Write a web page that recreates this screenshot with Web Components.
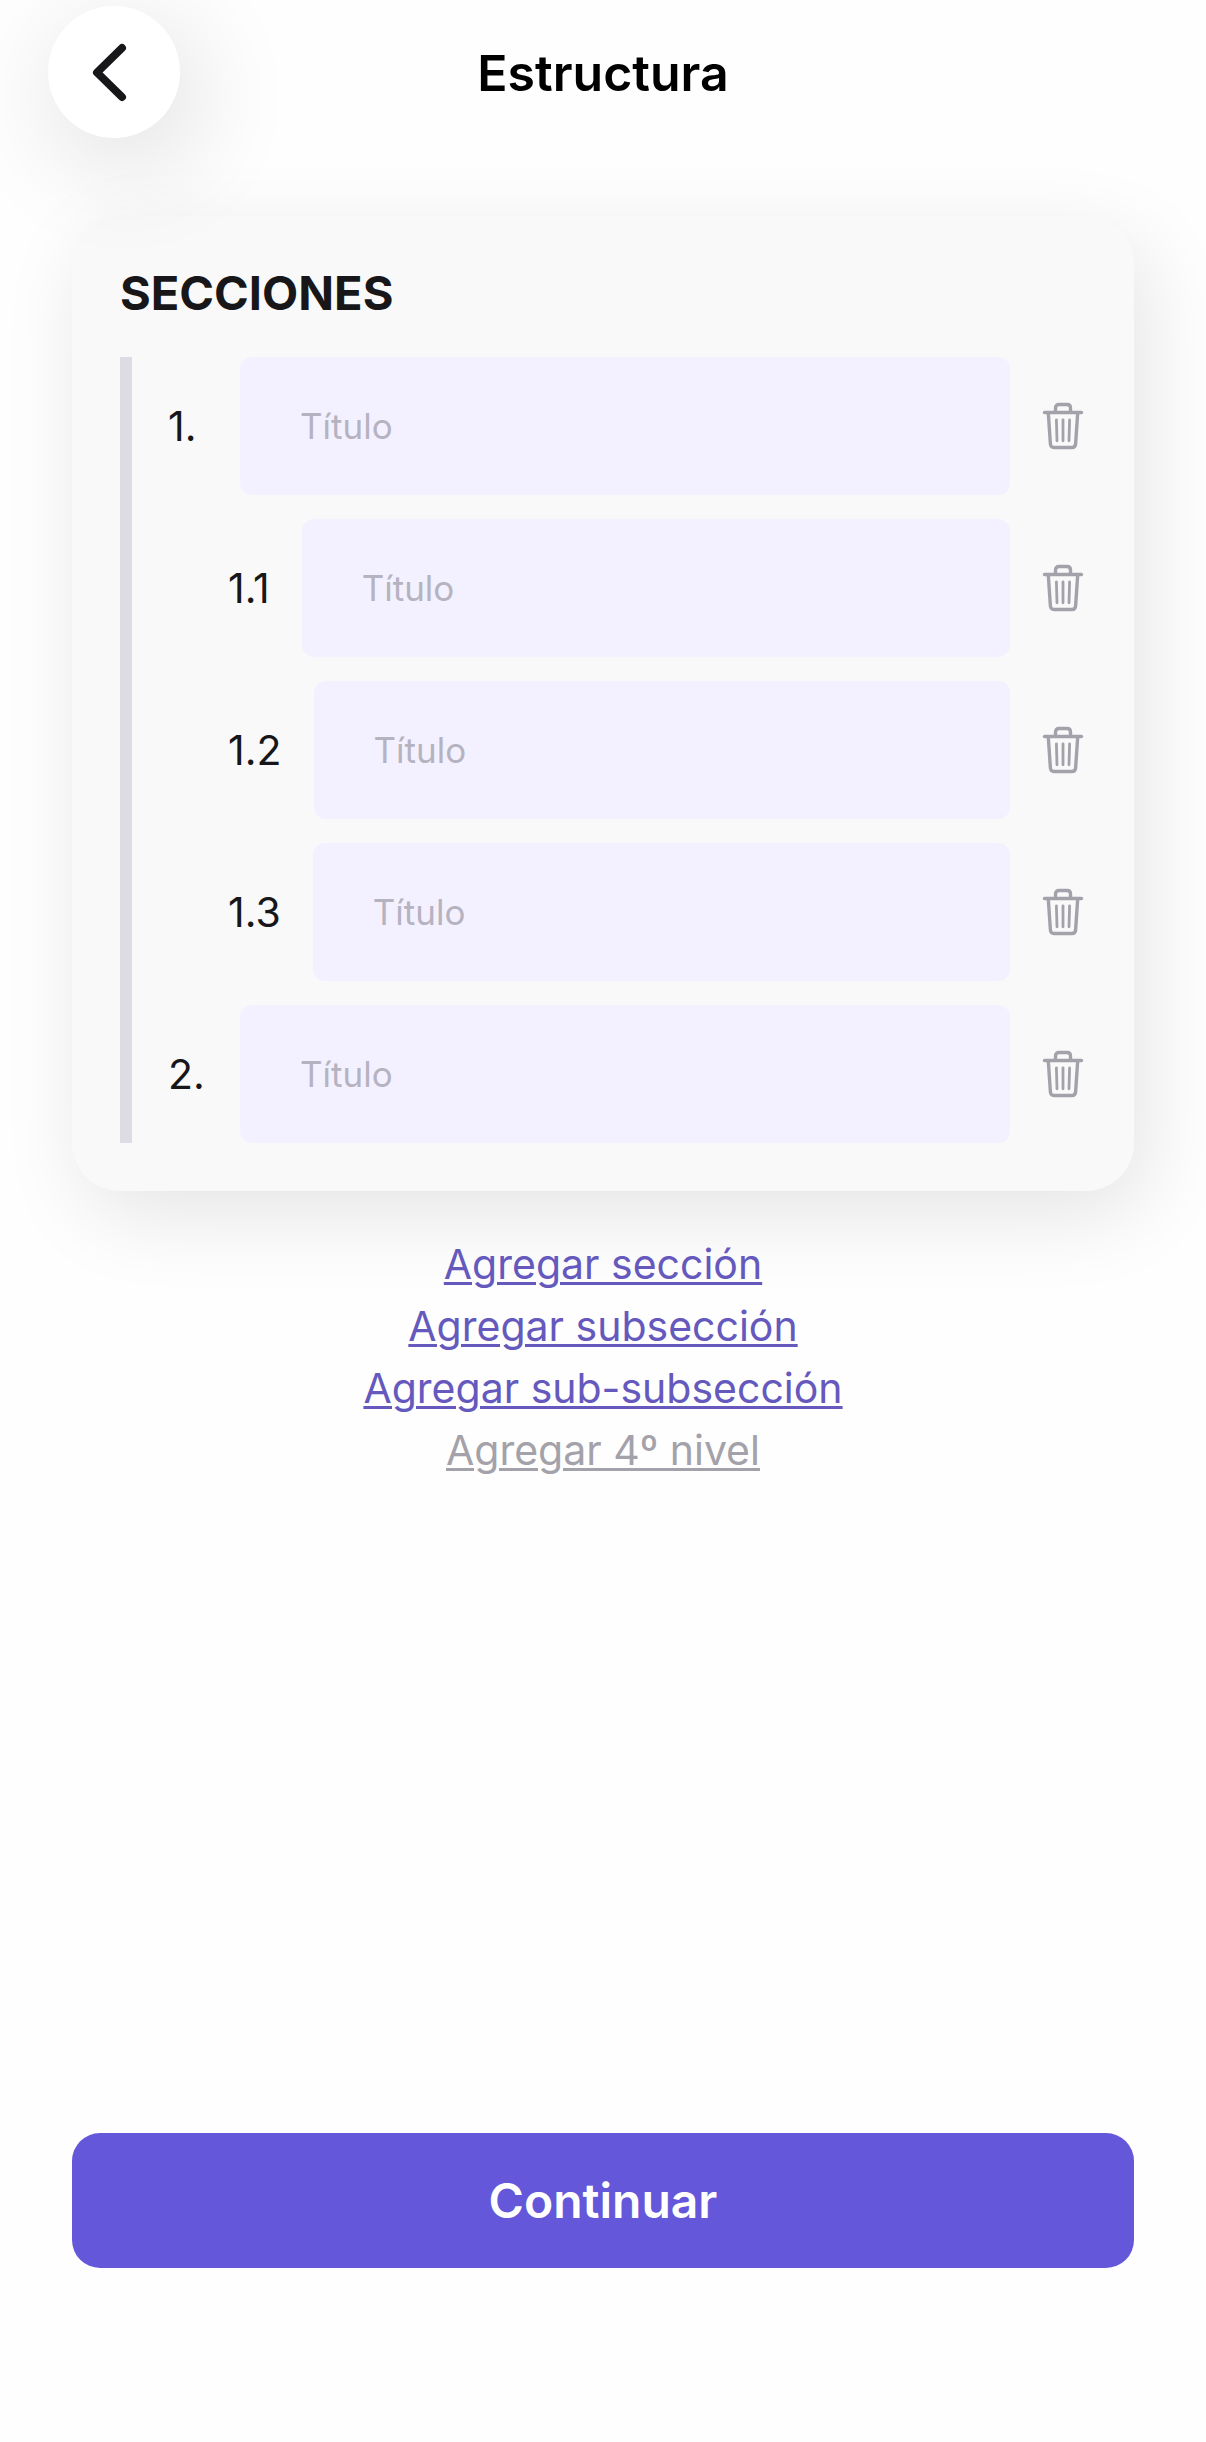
<!DOCTYPE html>
<html lang="es">
<head>
<meta charset="utf-8">
<meta name="viewport" content="width=device-width, initial-scale=1">
<title>Estructura</title>
<style>
body{
    margin: 0;
    background: #fefefe;
    color: #17171a;
    font-family: Inter, "Liberation Sans", sans-serif;
    --accent: #6457d9;
    --link: #6559bd;
    --muted: #a3a2aa;
    --field: #f3f1ff;
}
</style>
</head>
<body>

<structure-page>
    <page-header slot="header">Estructura</page-header>
    <section-card heading="Secciones">
        <section-row number="1."></section-row>
        <section-row number="1.1" nested></section-row>
        <section-row number="1.2" nested></section-row>
        <section-row number="1.3" nested></section-row>
        <section-row number="2."></section-row>
    </section-card>
    <add-links>
        <add-link>Agregar sección</add-link>
        <add-link>Agregar subsección</add-link>
        <add-link>Agregar sub-subsección</add-link>
        <add-link disabled>Agregar 4º nivel</add-link>
    </add-links>
    <primary-button slot="footer">Continuar</primary-button>
</structure-page>

<script>
function render(element, html) {
    const template = document.createElement('template');
    template.innerHTML = html;
    element.attachShadow({mode: 'open'});
    element.shadowRoot.appendChild(template.content.cloneNode(true));
}

class StructurePage extends HTMLElement {
    constructor() {
        super();
        render(this, `
<style>
:host{
    box-sizing: border-box;
    display: flex;
    flex-direction: column;
    min-height: 100vh;
    padding: 6px 0 174px;
}

main{
    padding: 78px 72px;
}

footer{
    margin-top: auto;
    padding: 0 72px;
}
</style>

<slot name="header"></slot>
<main><slot></slot></main>
<footer><slot name="footer"></slot></footer>
        `);
    }
}

class PageHeader extends HTMLElement {
    constructor() {
        super();
        render(this, `
<style>
:host{
    display: block;
    position: relative;
    z-index: 1;
}

header{
    display: grid;
    grid-template-columns: 132px 1fr 132px;
    align-items: center;
    padding: 0 48px;
}

button{
    display: grid;
    place-items: center;
    width: 132px;
    height: 132px;
    padding: 0;
    border: 0;
    border-radius: 50%;
    background: #fff;
    box-shadow: 12px 24px 110px rgba(0, 0, 0, 0.14);
    color: inherit;
    cursor: pointer;
}

h1{
    margin: 0;
    padding-top: 2px;
    color: #000;
    font-size: 50px;
    font-weight: 600;
    line-height: 60px;
    text-align: center;
}
</style>

<header>
    <button type="button" aria-label="Volver">
        <svg width="72" height="72" viewBox="0 0 72 72" fill="none" stroke="currentColor" stroke-width="8" stroke-linecap="round" stroke-linejoin="round">
            <path d="M44 12 L19 36.5 L44 61"/>
        </svg>
    </button>
    <h1><slot></slot></h1>
</header>
        `);
    }
}

class SectionCard extends HTMLElement {
    constructor() {
        super();
        render(this, `
<style>
:host{
    display: block;
}

section{
    padding: 48px;
    border-radius: 48px;
    background: #f9f9f9;
    box-shadow: 12px 24px 84px rgba(0, 0, 0, 0.1);
}

h2{
    margin: 0 0 36px;
    font-size: 47px;
    font-weight: 700;
    line-height: 57px;
    text-transform: uppercase;
}

.rows{
    display: flex;
    flex-direction: column;
    gap: 24px;
    padding-left: 36px;
    border-left: 12px solid #dddce4;
}
</style>

<section>
    <h2></h2>
    <div class="rows"><slot></slot></div>
</section>
        `);

        this.shadowRoot.querySelector('h2').innerText =
        this.getAttribute('heading');
    }
}

class SectionRow extends HTMLElement {
    constructor() {
        super();
        render(this, `
<style>
:host{
    display: flex;
    align-items: center;
}

:host([nested]){
    padding-left: 60px;
}

label{
    flex: none;
    width: 72px;
    font-size: 41px;
    line-height: 50px;
}

:host([nested]) label{
    width: auto;
    padding-right: 32px;
}

input{
    box-sizing: border-box;
    flex: 1;
    min-width: 0;
    height: 138px;
    padding: 0 60px;
    border: 0;
    border-radius: 12px;
    outline-color: var(--accent);
    background: var(--field);
    color: inherit;
    font: inherit;
    font-size: 35px;
}

input::placeholder{
    color: #b6b3c1;
    opacity: 1;
}

button{
    flex: none;
    margin-left: 30px;
    padding: 0;
    border: 0;
    background: none;
    color: var(--muted);
    cursor: pointer;
}

svg{
    display: block;
}
</style>

<label for="title"></label>
<input id="title" type="text" placeholder="Título">
<button type="button" aria-label="Eliminar">
    <svg width="46" height="48" viewBox="0 0 46 48" fill="none" stroke="currentColor" stroke-width="3.4" stroke-linecap="round" stroke-linejoin="round">
        <path d="M4.5 10.5 H41.5"/>
        <path d="M15.5 10 V6 Q15.5 2.5 19 2.5 H27 Q30.5 2.5 30.5 6 V10"/>
        <path d="M8.3 11 L10.4 42 Q10.7 45.5 14 45.5 H32 Q35.3 45.5 35.6 42 L37.7 11"/>
        <path stroke-width="2.8" d="M16.4 17.8 L17 38.8 M23 17.8 V38.8 M29.6 17.8 L29 38.8"/>
    </svg>
</button>
        `);

        this.shadowRoot.querySelector('label').innerText =
        this.getAttribute('number');
    }
}

class AddLinks extends HTMLElement {
    constructor() {
        super();
        render(this, `
<style>
:host{
    display: block;
}

nav{
    display: flex;
    flex-direction: column;
    align-items: center;
    padding-top: 42px;
}
</style>

<nav><slot></slot></nav>
        `);
    }
}

class AddLink extends HTMLElement {
    constructor() {
        super();
        render(this, `
<style>
:host{
    display: block;
    font-size: 41px;
    line-height: 62px;
}

a{
    color: var(--link);
    text-decoration: underline;
    text-decoration-thickness: 3px;
    text-underline-offset: 3px;
}

:host([disabled]) a{
    color: var(--muted);
}
</style>

<a href="#"><slot></slot></a>
        `);

        if (this.hasAttribute('disabled')) {
            this.shadowRoot.querySelector('a').setAttribute('aria-disabled', 'true');
        }
    }
}

class PrimaryButton extends HTMLElement {
    constructor() {
        super();
        render(this, `
<style>
:host{
    display: block;
}

button{
    width: 100%;
    height: 135px;
    border: 0;
    border-radius: 28px;
    background: var(--accent);
    color: #fff;
    font: inherit;
    font-size: 48px;
    font-weight: 600;
    cursor: pointer;
}
</style>

<button type="button"><slot></slot></button>
        `);
    }
}

customElements.define('structure-page', StructurePage);
customElements.define('page-header', PageHeader);
customElements.define('section-card', SectionCard);
customElements.define('section-row', SectionRow);
customElements.define('add-links', AddLinks);
customElements.define('add-link', AddLink);
customElements.define('primary-button', PrimaryButton);
</script>
</body>
</html>
